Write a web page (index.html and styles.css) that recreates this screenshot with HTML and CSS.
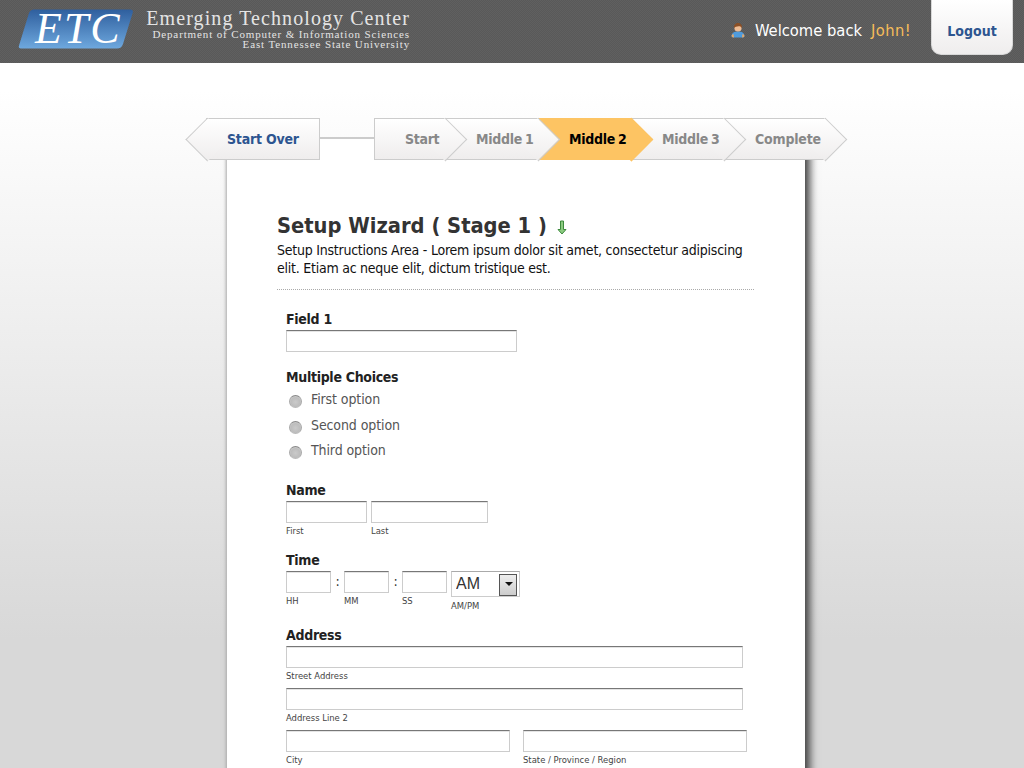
FILE: index.html
```html
<!DOCTYPE html>
<html lang="en">
<head>
<meta charset="utf-8">
<title>Setup Wizard</title>
<link rel="stylesheet" href="styles.css">
</head>
<body>
<header class="topbar">
  <div class="brand">
    <svg class="logo" width="116" height="42" viewBox="0 0 116 42" aria-label="ETC">
      <defs><linearGradient id="logoFill" x1="0" y1="0" x2="0" y2="1"><stop offset="0" stop-color="#2f5f9e"/><stop offset="1" stop-color="#6ea8de"/></linearGradient></defs>
      <path d="M16 1.500H112Q115.500 1.500 114.800 4.500L105 36Q103.500 40.500 99 40.500H3Q0 40.500 1 37.500L11 5Q12.500 1.500 16 1.500Z" fill="url(#logoFill)"/>
      <text class="logo-text" x="17" y="35">ETC</text>
    </svg>
    <div class="brand-text">
      <div class="brand-name">Emerging Technology Center</div>
      <div class="brand-sub">Department of Computer &amp; Information Sciences</div>
      <div class="brand-sub">East Tennessee State University</div>
    </div>
  </div>
  <div class="userbox">
    <svg class="avatar" width="16" height="16" viewBox="0 0 16 16">
      <path d="M1.500 14.500C1.500 10.500 4.500 9.500 8 9.500S14.500 10.500 14.500 14.500Q14 15.500 12 15.500H4Q2 15.500 1.500 14.500Z" fill="#4f9bdc"/>
      <path d="M1.500 14C1.800 12.800 2.300 12.300 3.500 12L4 15.500Q2 15.500 1.500 14ZM14.500 14C14.200 12.800 13.700 12.300 12.500 12L12 15.500Q14 15.500 14.500 14Z" fill="#e8a765"/>
      <circle cx="8" cy="6" r="3.600" fill="#eebc94"/>
      <path d="M4 6C3.500 2.500 6 1 8 1S12.500 2.500 12 6C11 4.500 10 4 8.500 4.200 6.500 4.500 5 4.500 4 6Z" fill="#8a4f26"/>
    </svg>
    <span class="welcome">Welcome back</span>
    <span class="username">John!</span>
    <a class="logout">Logout</a>
  </div>
</header>

<main class="page">
  <nav class="wizard-nav">
    <a class="step-back">Start Over</a>
    <div class="nav-link"></div>
    <ol class="steps">
      <li class="step step-first">Start</li>
      <li class="step step-m1">Middle 1</li>
      <li class="step step-active">Middle 2</li>
      <li class="step step-m3">Middle 3</li>
      <li class="step step-last">Complete</li>
    </ol>
  </nav>

  <section class="card">
    <div class="intro">
      <h1 class="title">Setup Wizard ( Stage 1 )
        <svg class="down-icon" width="10" height="15" viewBox="0 0 10 15"><path d="M3.500 1H6.500V9.500H9L5 14 1 9.500H3.500Z" fill="#8ccb80" stroke="#3d8a3d" stroke-width="1"/></svg>
      </h1>
      <p class="instructions">Setup Instructions Area - Lorem ipsum dolor sit amet, consectetur adipiscing elit. Etiam ac neque elit, dictum tristique est.</p>
    </div>
    <form class="form">
      <div class="field field-1">
        <label class="label">Field 1</label>
        <input class="input w-231" type="text">
      </div>
      <div class="field field-2">
        <div class="label">Multiple Choices</div>
        <label class="choice"><span class="radio"></span>First option</label>
        <label class="choice"><span class="radio"></span>Second option</label>
        <label class="choice"><span class="radio"></span>Third option</label>
      </div>
      <div class="field field-3">
        <div class="label">Name</div>
        <div class="row gap-4">
          <div class="part"><input class="input w-81" type="text"><span class="sub">First</span></div>
          <div class="part"><input class="input w-117" type="text"><span class="sub">Last</span></div>
        </div>
      </div>
      <div class="field field-4">
        <div class="label">Time</div>
        <div class="row">
          <div class="part"><input class="input w-45" type="text"><span class="sub">HH</span></div>
          <span class="colon">:</span>
          <div class="part"><input class="input w-45" type="text"><span class="sub">MM</span></div>
          <span class="colon">:</span>
          <div class="part"><input class="input w-45" type="text"><span class="sub">SS</span></div>
          <div class="part part-ampm">
            <div class="select"><select class="select-el"><option>AM</option><option>PM</option></select></div>
            <span class="sub">AM/PM</span>
          </div>
        </div>
      </div>
      <div class="field field-5">
        <div class="label">Address</div>
        <div class="part"><input class="input w-457" type="text"><span class="sub sub-addr">Street Address</span></div>
        <div class="part"><input class="input w-457" type="text"><span class="sub sub-addr">Address Line 2</span></div>
        <div class="row gap-13">
          <div class="part"><input class="input w-224" type="text"><span class="sub sub-addr">City</span></div>
          <div class="part"><input class="input w-224" type="text"><span class="sub sub-addr">State / Province / Region</span></div>
        </div>
      </div>
    </form>
  </section>
</main>
</body>
</html>
```
FILE: styles.css
```css
* { box-sizing: border-box; }
html, body { margin: 0; padding: 0; height: 768px; overflow: hidden; }
body {
  background: #d8d8d8 linear-gradient(to bottom, #fff 63px, #fff 90px, #d8d8d8 640px);
  font-family: "DejaVu Sans Condensed", "DejaVu Sans", sans-serif;
  font-size: 14px;
  color: #222;
}

/* Header */
.topbar {
  height: 63px;
  background: repeating-conic-gradient(#595959 0 25%, #606060 0 50%) 0 0 / 2px 2px;
  display: flex;
  justify-content: space-between;
  padding: 0 11px 0 18px;
}
.brand { display: flex; align-items: flex-start; gap: 12px; }
.logo { margin-top: 8px; overflow: visible; }
.logo-text { font: italic 44px "Liberation Serif", serif; fill: #fff; letter-spacing: 2px; }
.brand-text {
  width: 264px;
  padding-top: 7px;
  text-align: right;
  font-family: "Liberation Serif", serif;
  color: #e4e4e4;
}
.brand-name { font-size: 20px; line-height: 22px; letter-spacing: 1.080px; white-space: nowrap; }
.brand-sub { font-size: 11px; line-height: 10px; letter-spacing: .87px; white-space: nowrap; }
.userbox { display: flex; align-items: flex-start; }
.avatar { margin-top: 22px; margin-right: 9px; }
.welcome { margin-top: 21px; color: #fff; font-size: 16.400px; line-height: 20px; }
.username { margin: 21px 20px 0 9px; color: #f5bc5a; font-size: 16.400px; line-height: 20px; letter-spacing: .4px; }
.logout {
  width: 82px;
  height: 55px;
  padding-top: 23px;
  text-align: center;
  font-weight: bold;
  color: #2d5590;
  background: linear-gradient(to bottom, #fff, #efeded);
  border: 1px solid #d8d8d8;
  border-top: 0;
  border-radius: 0 0 10px 10px;
}

/* Wizard navigation */
.page { display: flex; flex-direction: column; }
.wizard-nav {
  position: relative;
  z-index: 2;
  display: flex;
  align-items: flex-start;
  margin: 55px 0 0 206px;
  height: 42px;
  font-weight: bold;
  line-height: 40px;
  letter-spacing: -.2px;
}
.step-back {
  position: relative;
  z-index: 1;
  width: 114px;
  height: 42px;
  padding-left: 21px;
  color: #2d5590;
  background: linear-gradient(to bottom, #fff, #efeded);
  border: 1px solid #ccc;
  border-left: 0;
}
.step-back::before {
  content: "";
  position: absolute;
  z-index: -1;
  left: -14px;
  top: 5.150px;
  width: 29.700px;
  height: 29.700px;
  transform: rotate(45deg);
  background: linear-gradient(to bottom right, #fff, #efeded);
  border-left: 1px solid #ccc;
  border-bottom: 1px solid #ccc;
}
.nav-link { width: 54px; height: 2px; margin-top: 19px; background: #ccc; }
.steps { display: flex; margin: 0; padding: 0; list-style: none; }
.step {
  position: relative;
  height: 42px;
  padding-left: 30px;
  color: #888;
  background: linear-gradient(to bottom, #fff, #efeded);
  border-top: 1px solid #ccc;
  border-bottom: 1px solid #ccc;
  white-space: nowrap;
  letter-spacing: -.3px;
  word-spacing: -1px;
}
.step::after {
  content: "";
  position: absolute;
  z-index: -1;
  right: -14.850px;
  top: 5.150px;
  width: 29.700px;
  height: 29.700px;
  transform: rotate(45deg);
  background: linear-gradient(to bottom right, #fff, #efeded);
  border-top: 1px solid #ccc;
  border-right: 1px solid #ccc;
}
.step-first { width: 72px; border-left: 1px solid #ccc; z-index: 5; }
.step-m1 { width: 93px; z-index: 4; }
.step-active { width: 93px; z-index: 3; color: #000; background: #fdc463; border-color: #fdc463; }
.step-active::after { background: #fdc463; border-color: #fdc463; }
.step-m3 { width: 93px; z-index: 2; }
.step-last { width: 101px; z-index: 1; letter-spacing: -.2px; }

/* Card */
.card {
  position: relative;
  z-index: 1;
  width: 578px;
  height: 660px;
  margin: -22px 0 0 227px;
  padding: 76px 51px 0 50px;
  background: #fff;
  box-shadow: 5px 0 8px #444, -1px 0 3px #bbb;
  clip-path: inset(0 -20px -20px -20px);
}
.intro { border-bottom: 1px dotted #aaa; height: 76px; }
.title {
  margin: 0 0 3px;
  font-size: 21.700px;
  line-height: 24px;
  font-weight: bold;
  color: #333;
  white-space: nowrap;
}
.down-icon { margin-left: 3px; vertical-align: -2px; }
.instructions { margin: 0; line-height: 18px; color: #111; letter-spacing: -.24px; }

/* Form */
.form { display: flex; flex-direction: column; padding: 20px 0 0 9px; }
.field { display: flex; flex-direction: column; align-items: flex-start; }
.label { font-weight: bold; line-height: 18px; color: #222; margin-bottom: 2px; letter-spacing: -.3px; }
.input {
  display: block;
  height: 22px;
  padding: 0;
  background: #fff;
  border: 1px solid #ccc;
  border-top-color: #777;
  box-shadow: inset 0 1px 0 #e4e4e4;
  border-radius: 0;
  outline: 0;
}
.w-231 { width: 231px; }
.w-81 { width: 81px; }
.w-117 { width: 117px; }
.w-45 { width: 45px; }
.w-457 { width: 457px; }
.w-224 { width: 224px; }
.field-2 { margin-top: 16px; }
.field-2 .label { margin-bottom: 4px; }
.choice { display: flex; align-items: flex-start; height: 25.500px; line-height: 18px; color: #555; letter-spacing: -.1px; }
.radio {
  width: 13px;
  height: 13px;
  margin: 5px 9px 0 3px;
  border-radius: 50%;
  background: radial-gradient(circle at 50% 55%, #cacaca, #bdbdbd 55%, #e8e8e8 100%);
  border: 1px solid #a8a8a8;
  border-top-color: #888;
  border-bottom-color: #bbb;
}
.field-3 { margin-top: 14px; }
.field-4 { margin-top: 12px; }
.field-5 { margin-top: 11px; }
.row { display: flex; align-items: flex-start; }
.gap-4 { gap: 4px; }
.gap-13 { gap: 13px; }
.part { display: flex; flex-direction: column; align-items: flex-start; }
.sub { font-size: 9.400px; line-height: 16px; color: #444; }
.sub-addr { line-height: 16px; margin-bottom: 4px; }
.colon { width: 13px; text-align: center; line-height: 20px; color: #333; font-size: 14px; }
.part-ampm { margin-left: 4px; }
.part-ampm .sub { line-height: 18px; }
.select {
  position: relative;
  width: 69px;
  height: 26px;
  border: 1px solid #ccc;
  border-top-color: #aaa;
  background: #fff;
}
.select::after {
  content: "";
  position: absolute;
  right: 2px;
  top: 2px;
  width: 16px;
  height: 20px;
  border: 1px solid #555;
  background: linear-gradient(to bottom, #eee, #ccc);
}
.select::before {
  content: "";
  position: absolute;
  z-index: 1;
  right: 6px;
  top: 10px;
  border: 4px solid transparent;
  border-top-color: #111;
  border-bottom: 0;
}
.select-el {
  appearance: none;
  display: block;
  width: 100%;
  height: 100%;
  padding: 0 0 0 4px;
  border: 0;
  background: transparent;
  font: 16px "Liberation Sans", sans-serif;
  color: #333;
}
```
